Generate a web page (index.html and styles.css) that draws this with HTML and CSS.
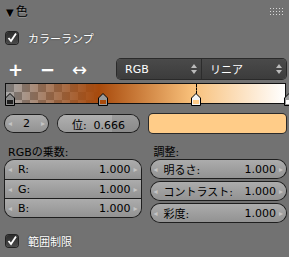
FILE: index.html
```html
<!DOCTYPE html>
<html lang="ja">
<head>
    <meta charset="UTF-8">
    <title>色</title>
    <link rel="stylesheet" href="styles.css">
</head>
<body>
    <div class="panel">
        <div class="panel-head">
            <span class="head-title"><span class="tri">▼</span>色</span>
            <svg class="grip" width="14" height="7" viewBox="0 0 14 7">
                <g fill="#d8d8d8">
                    <rect x="0" y="0" width="1" height="1"/><rect x="3" y="0" width="1" height="1"/><rect x="6" y="0" width="1" height="1"/><rect x="9" y="0" width="1" height="1"/><rect x="12" y="0" width="1" height="1"/>
                    <rect x="0" y="3" width="1" height="1"/><rect x="3" y="3" width="1" height="1"/><rect x="6" y="3" width="1" height="1"/><rect x="9" y="3" width="1" height="1"/><rect x="12" y="3" width="1" height="1"/>
                    <rect x="0" y="6" width="1" height="1"/><rect x="3" y="6" width="1" height="1"/><rect x="6" y="6" width="1" height="1"/><rect x="9" y="6" width="1" height="1"/><rect x="12" y="6" width="1" height="1"/>
                </g>
            </svg>
        </div>

        <label class="check-row top-check">
            <span class="checkbox">
                <svg width="12" height="12" viewBox="0 0 12 12"><path d="M2.5 6 L5 9 L10 1.5" fill="none" stroke="#fff" stroke-width="1.8"/></svg>
            </span>
            <span class="check-label">カラーランプ</span>
        </label>

        <div class="tool-row">
            <span class="tool">+</span>
            <span class="tool minus">−</span>
            <span class="tool flip">↔</span>
            <div class="menus">
                <div class="menu">RGB
                    <svg class="updown" width="6" height="10" viewBox="0 0 6 10"><path d="M0 4 L3 0 L6 4 Z M0 6 L3 10 L6 6 Z" fill="#bbb"/></svg>
                </div>
                <div class="menu">リニア
                    <svg class="updown" width="6" height="10" viewBox="0 0 6 10"><path d="M0 4 L3 0 L6 4 Z M0 6 L3 10 L6 6 Z" fill="#bbb"/></svg>
                </div>
            </div>
        </div>

        <div class="ramp-wrap">
            <div class="ramp"></div>
            <span class="stop-line" style="left: 191px;"></span>
            <svg class="stop" style="left: 5px;" width="10" height="13" viewBox="0 0 10 13"><path d="M0.5 12.5 V5 L5 0.5 L9.5 5 V12.5 Z" fill="#8a8a8a" stroke="#000"/><rect x="2" y="7" width="6" height="4" fill="#202020"/></svg>
            <svg class="stop" style="left: 98px;" width="10" height="13" viewBox="0 0 10 13"><path d="M0.5 12.5 V5 L5 0.5 L9.5 5 V12.5 Z" fill="#9a9a9a" stroke="#000"/><rect x="2" y="7" width="6" height="4" fill="#a84a0c"/></svg>
            <svg class="stop" style="left: 191px;" width="10" height="13" viewBox="0 0 10 13"><path d="M0.5 12.5 V5 L5 0.5 L9.5 5 V12.5 Z" fill="#f4f4f4" stroke="#000"/><rect x="2" y="7" width="6" height="4" fill="#ffcc88"/></svg>
            <svg class="stop" style="left: 284px;" width="10" height="13" viewBox="0 0 10 13"><path d="M0.5 12.5 V5 L5 0.5 L9.5 5 V12.5 Z" fill="#9a9a9a" stroke="#000"/><rect x="2" y="7" width="6" height="4" fill="#ffffff"/></svg>
        </div>

        <div class="pos-row">
            <div class="num small"><span class="arr">◂</span><span class="val">2</span><span class="arr">▸</span></div>
            <div class="num slider"><span class="fill" style="width: 66.6%;"></span><span class="slabel">位:&nbsp; 0.666</span></div>
            <div class="swatch"></div>
        </div>

        <div class="cols">
            <div class="col">
                <div class="col-label">RGBの乗数:</div>
                <div class="stack">
                    <div class="num row"><span class="arr">◂</span><span class="name">R:</span><span class="val">1.000</span><span class="arr">▸</span></div>
                    <div class="num row"><span class="arr">◂</span><span class="name">G:</span><span class="val">1.000</span><span class="arr">▸</span></div>
                    <div class="num row"><span class="arr">◂</span><span class="name">B:</span><span class="val">1.000</span><span class="arr">▸</span></div>
                </div>
            </div>
            <div class="col">
                <div class="col-label">調整:</div>
                <div class="list">
                    <div class="num"><span class="arr">◂</span><span class="name">明るさ:</span><span class="val">1.000</span><span class="arr">▸</span></div>
                    <div class="num"><span class="arr">◂</span><span class="name">コントラスト:</span><span class="val">1.000</span><span class="arr">▸</span></div>
                    <div class="num"><span class="arr">◂</span><span class="name">彩度:</span><span class="val">1.000</span><span class="arr">▸</span></div>
                </div>
            </div>
        </div>

        <label class="check-row bottom-check">
            <span class="checkbox">
                <svg width="12" height="12" viewBox="0 0 12 12"><path d="M2.5 6 L5 9 L10 1.5" fill="none" stroke="#fff" stroke-width="1.8"/></svg>
            </span>
            <span class="check-label">範囲制限</span>
        </label>
    </div>
</body>
</html>
```

FILE: styles.css
```css
body {
    margin: 0;
    background: #727272;
    font-family: "DejaVu Sans", "Noto Sans CJK JP", sans-serif;
    font-size: 11px;
    color: #000;
}
.panel {
    width: 289px;
    height: 257px;
    padding: 0 3px 0 5px;
    box-sizing: border-box;
}
.panel-head {
    height: 20px;
    display: flex;
    align-items: center;
    justify-content: space-between;
}
.head-title {
    font-size: 12px;
    padding-left: 1px;
    text-shadow: 0 1px 0 rgba(255, 255, 255, 0.25);
}
.tri {
    font-size: 10px;
    margin-right: 2px;
}
.grip {
    margin-right: 2px;
    margin-top: 2px;
}
.check-row {
    display: flex;
    align-items: center;
    height: 14px;
}
.top-check {
    margin-top: 11px;
}
.checkbox {
    width: 12px;
    height: 12px;
    margin-left: 1px;
    border-radius: 3px;
    background: linear-gradient(#2c2c2c, #4a4a4a);
    box-shadow: 0 0 0 1px #222;
    display: flex;
}
.check-label {
    margin-left: 10px;
    color: #fff;
    font-size: 11px;
    text-shadow: 0 0 2px #333;
}
.tool-row {
    display: flex;
    align-items: center;
    height: 20px;
    margin-top: 14px;
}
.tool {
    color: #fff;
    font-size: 18px;
    font-weight: bold;
    width: 32px;
    text-align: left;
    padding-left: 3px;
    box-sizing: border-box;
}
.tool.minus {
    width: 34px;
}
.tool.flip {
    font-size: 18px;
    font-weight: normal;
    width: 46px;
    padding-left: 1px;
}
.menus {
    display: flex;
    flex: 1;
    height: 20px;
    border-radius: 4px;
    background: linear-gradient(#4a4a4a, #3c3c3c);
    box-shadow: 0 0 0 1px #2a2a2a;
}
.menu {
    flex: 1;
    display: flex;
    align-items: center;
    justify-content: space-between;
    color: #fff;
    padding: 0 4px 0 8px;
}
.menu + .menu {
    border-left: 1px solid #2c2c2c;
}
.ramp-wrap {
    position: relative;
    height: 24px;
    margin-top: 4px;
}
.ramp {
    height: 19px;
    border: 1px solid #111;
    background:
        linear-gradient(to right, rgba(150, 70, 10, 0) 0%, #a84a0c 33.3%, #f8c07a 66.6%, #ffffff 100%),
        repeating-conic-gradient(#a8a8a8 0 25%, #7a7a7a 0 50%) 0 0 / 16px 16px;
}
.stop {
    position: absolute;
    top: 10px;
    margin-left: -5px;
}
.stop-line {
    position: absolute;
    top: 1px;
    height: 10px;
    border-left: 1px dashed #000;
}
.pos-row {
    display: flex;
    align-items: center;
    margin-top: 7px;
    height: 19px;
}
.num {
    height: 17px;
    border-radius: 9px;
    background: linear-gradient(#acacac, #929292);
    box-shadow: 0 0 0 1px #1e1e1e;
    display: flex;
    align-items: center;
    padding: 0 3px;
    box-sizing: border-box;
    position: relative;
    overflow: hidden;
}
.arr {
    font-size: 8px;
    color: #c4c4c4;
}
.num .val {
    margin-left: auto;
    margin-right: 3px;
}
.num .name {
    margin-left: 6px;
}
.num.small {
    width: 43px;
}
.num.small .val {
    margin-right: auto;
}
.num.slider {
    width: 81px;
    margin-left: 10px;
    justify-content: center;
    background: linear-gradient(#9c9c9c, #8a8a8a);
}
.slider .fill {
    position: absolute;
    left: 0;
    top: 0;
    bottom: 0;
    background: linear-gradient(#b0b0b0, #9a9a9a);
}
.slabel {
    position: relative;
}
.swatch {
    flex: 1;
    margin-left: 10px;
    height: 19px;
    border-radius: 4px;
    background: #ffcc88;
    box-shadow: 0 0 0 1px #2a2a2a;
}
.cols {
    display: flex;
    gap: 10px;
    margin-top: 10px;
}
.col {
    flex: 1;
    display: flex;
    flex-direction: column;
}
.col-label {
    height: 14px;
    padding-left: 3px;
    margin-bottom: 3px;
}
.stack {
    display: flex;
    flex-direction: column;
    border-radius: 9px;
    overflow: hidden;
    box-shadow: 0 0 0 1px #1e1e1e;
}
.stack .num {
    border-radius: 0;
    box-shadow: none;
    height: 19px;
}
.stack .num + .num {
    border-top: 1px solid #1e1e1e;
}
.list {
    display: flex;
    flex-direction: column;
    gap: 4px;
}
.list .num {
    height: 18px;
}
.bottom-check {
    margin-top: 12px;
}
```
